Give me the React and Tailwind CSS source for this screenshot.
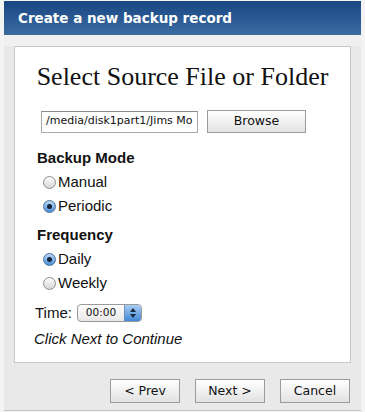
import React from "react";

function Radio({ checked }) {
  return checked ? (
    <span className="w-[13px] h-[13px] rounded-full border border-[#4a6f98] bg-gradient-to-b from-[#b9d8f6] to-[#4b8fd8] flex items-center justify-center shrink-0">
      <span className="w-[5px] h-[5px] rounded-full bg-[#15233a]" />
    </span>
  ) : (
    <span className="w-[13px] h-[13px] rounded-full border border-[#8d8d8d] bg-gradient-to-b from-[#fdfdfd] to-[#d6d6d6] shrink-0" />
  );
}

function Btn({ children, className = "" }) {
  return (
    <div
      className={
        "flex items-center justify-center border border-[#9c9c9c] bg-gradient-to-b from-[#ffffff] to-[#e2e2e2] text-[#111] text-[12.5px] " +
        className
      }
      style={{ fontFamily: '"DejaVu Sans", Verdana, sans-serif' }}
    >
      {children}
    </div>
  );
}

export default function App() {
  const sans = { fontFamily: '"Liberation Sans", Arial, Helvetica, sans-serif' };
  return (
    <div className="w-[365px] h-[412px] bg-[#f3f3f3] pt-[1px] overflow-hidden">
      <div className="mx-[4px] h-[410px] bg-[#e9e9e9] border-b border-[#c4c4c4] flex flex-col">
        <div
          className="h-[34px] bg-gradient-to-b from-[#174683] to-[#3c6ba2] flex items-center pl-[14px] text-white font-bold text-[13.5px]"
          style={{ fontFamily: '"DejaVu Sans", Verdana, sans-serif' }}
        >
          Create a new backup record
        </div>
        <div className="h-[11px] bg-[#f0f0f0]" />
        <div className="ml-[10px] w-[337px] h-[317px] bg-white border border-[#c9c9c9] flex flex-col text-[#111]" style={sans}>
          <div
            className="text-center text-[26px] leading-[30px] mt-[15px] text-[#111]"
            style={{ fontFamily: '"Liberation Serif", Georgia, serif' }}
          >
            Select Source File or Folder
          </div>
          <div className="flex items-center mt-[18px] ml-[26px] gap-[9px]">
            <div
              className="w-[157px] h-[22px] border border-[#a8a8a8] border-t-[#8a8a8a] bg-white flex items-center pl-[4px] overflow-hidden whitespace-nowrap text-[11px] text-[#111]"
              style={{ fontFamily: '"DejaVu Sans", Verdana, sans-serif' }}
            >
              /media/disk1part1/Jims Mo
            </div>
            <Btn className="w-[99px] h-[23px]">Browse</Btn>
          </div>
          <div className="ml-[22px] mt-[16px] font-bold text-[15px] leading-[18px]">Backup Mode</div>
          <div className="ml-[28px] mt-[6px] flex items-center gap-[2px] text-[15px] leading-[18px] h-[18px]">
            <Radio />
            <span>Manual</span>
          </div>
          <div className="ml-[28px] mt-[6px] flex items-center gap-[2px] text-[15px] leading-[18px] h-[18px]">
            <Radio checked />
            <span>Periodic</span>
          </div>
          <div className="ml-[22px] mt-[11px] font-bold text-[15px] leading-[18px]">Frequency</div>
          <div className="ml-[28px] mt-[6px] flex items-center gap-[2px] text-[15px] leading-[18px] h-[18px]">
            <Radio checked />
            <span>Daily</span>
          </div>
          <div className="ml-[28px] mt-[6px] flex items-center gap-[2px] text-[15px] leading-[18px] h-[18px]">
            <Radio />
            <span>Weekly</span>
          </div>
          <div className="ml-[20px] mt-[12px] flex items-center gap-[5px] text-[15px] h-[18px]">
            <span>Time:</span>
            <div className="w-[65px] h-[18px] rounded-[4px] border border-[#9a9a9a] bg-gradient-to-b from-white to-[#e8e8e8] flex items-center overflow-hidden">
              <span
                className="flex-1 text-center text-[10.5px] text-[#111]"
                style={{ fontFamily: '"DejaVu Sans", Verdana, sans-serif' }}
              >
                00:00
              </span>
              <span className="w-[17px] h-full bg-gradient-to-b from-[#a9cdf3] to-[#3f87d5] border-l border-[#6e8fb4] flex flex-col items-center justify-center gap-[2px]">
                <svg width="6" height="4" viewBox="0 0 6 4"><path d="M0 4 L3 0 L6 4 Z" fill="#1b2a40" /></svg>
                <svg width="6" height="4" viewBox="0 0 6 4"><path d="M0 0 L3 4 L6 0 Z" fill="#1b2a40" /></svg>
              </span>
            </div>
          </div>
          <div className="ml-[19px] mt-[8px] italic text-[15px] leading-[18px]">Click Next to Continue</div>
        </div>
        <div className="flex justify-end gap-[15px] mt-[16px] mr-[11px]">
          <Btn className="w-[70px] h-[24px]">&lt; Prev</Btn>
          <Btn className="w-[70px] h-[24px]">Next &gt;</Btn>
          <Btn className="w-[70px] h-[24px]">Cancel</Btn>
        </div>
      </div>
    </div>
  );
}
